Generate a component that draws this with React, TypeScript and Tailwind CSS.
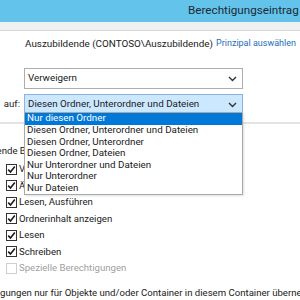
const font = { fontFamily: 'Roboto, "Open Sans", sans-serif' };

function Chevron() {
  return (
    <svg width="9" height="6" viewBox="0 0 9 6" className="shrink-0">
      <path d="M1 1 L4.5 4.5 L8 1" fill="none" stroke="#333" strokeWidth="1.4" />
    </svg>
  );
}

function Check({ on, disabled }: { on?: boolean; disabled?: boolean }) {
  return (
    <div
      className={`w-[11px] h-[11px] border flex items-center justify-center shrink-0 ${
        disabled ? "border-[#cfcfcf] bg-white" : "border-[#333] bg-white"
      }`}
    >
      {on && (
        <svg width="9" height="9" viewBox="0 0 9 9">
          <path d="M1.2 4.6 L3.5 7 L7.8 1.6" fill="none" stroke="#1b1b1b" strokeWidth="1.6" />
        </svg>
      )}
    </div>
  );
}

const options = [
  "Nur diesen Ordner",
  "Diesen Ordner, Unterordner und Dateien",
  "Diesen Ordner, Unterordner",
  "Diesen Ordner, Dateien",
  "Nur Unterordner und Dateien",
  "Nur Unterordner",
  "Nur Dateien",
];

const perms = [
  { label: "Vollzugriff", on: true },
  { label: "Ändern", on: true },
  { label: "Lesen, Ausführen", on: true },
  { label: "Ordnerinhalt anzeigen", on: true },
  { label: "Lesen", on: true },
  { label: "Schreiben", on: true },
  { label: "Spezielle Berechtigungen", on: false, disabled: true },
];

export default function App() {
  return (
    <div className="w-[300px] h-[300px] overflow-hidden bg-white relative text-[9.6px] text-[#1a1a1a]" style={font}>
      {/* Titelleiste */}
      <div className="h-[22px] bg-[#64c3ea] flex items-center pl-[188px] whitespace-nowrap">
        <span className="text-[11.7px] text-[#1d2b36]">Berechtigungseintrag für „Daten“</span>
      </div>
      <div className="h-[9px] bg-[#f0f0f0] border-b border-[#d6d6d6]" />

      {/* Prinzipal */}
      <div className="mt-[6px] h-[14px] pl-[25px] flex items-center gap-[3px] whitespace-nowrap text-[9.9px]">
        <span>Auszubildende (CONTOSO\Auszubildende)</span>
        <span className="text-[9px] text-[#1e6eb6]">Prinzipal auswählen</span>
      </div>

      {/* Typ */}
      <div className="mt-[17px] flex items-center">
        <div className="w-[24px]" />
        <div className="w-[219px] h-[21px] border border-[#adadad] bg-white flex items-center justify-between pl-[3px] pr-[5px] whitespace-nowrap text-[9.8px]">
          <span>Verweigern</span>
          <Chevron />
        </div>
      </div>

      {/* Anwenden auf */}
      <div className="mt-[5px] flex items-center">
        <div className="w-[24px] pr-[4px] whitespace-nowrap overflow-hidden flex justify-end">
          <span>auf:</span>
        </div>
        <div className="w-[219px] h-[21px] border border-[#8ab4df] bg-[#cce8ff] flex items-center justify-between pl-[3px] pr-[5px] whitespace-nowrap text-[9.8px]">
          <span>Diesen Ordner, Unterordner und Dateien</span>
          <Chevron />
        </div>
      </div>

      <div className="mt-[7px] h-[2px] bg-[#e3e3e3]" />

      {/* Grundlegende Berechtigungen */}
      <div className="mt-[20px] h-[14px] ml-[-42px] whitespace-nowrap flex items-center">
        Grundlegende Berechtigungen:
      </div>
      <div className="mt-[3px] flex flex-col">
        {perms.map((p) => (
          <div key={p.label} className="h-[16.5px] pl-[6px] flex items-center gap-[2px] whitespace-nowrap">
            <Check on={p.on} disabled={p.disabled} />
            <span className={p.disabled ? "text-[#a0a0a0]" : ""}>{p.label}</span>
          </div>
        ))}
      </div>

      <div className="mt-[10px] h-[14px] ml-[-35px] whitespace-nowrap flex items-center">
        Berechtigungen nur für Objekte und/oder Container in diesem Container übernehmen
      </div>

      {/* Aufgeklappte Liste */}
      <div className="absolute left-[24px] top-[112px] w-[219px] border border-[#a8a8a8] bg-white shadow-[1px_1px_2px_rgba(0,0,0,0.12)] text-[9.8px]">
        {options.map((o, i) => (
          <div
            key={o}
            className={`h-[11.6px] flex items-center pl-[2px] whitespace-nowrap ${
              i === 0 ? "bg-[#0078d7] text-white" : ""
            }`}
          >
            {o}
          </div>
        ))}
      </div>
    </div>
  );
}
